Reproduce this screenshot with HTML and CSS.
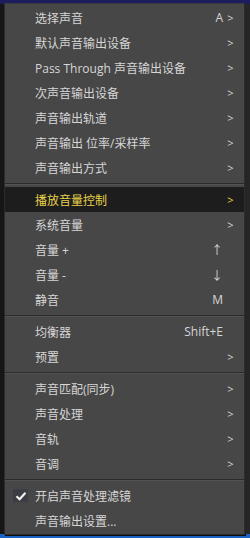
FILE: index.html
```html
<!DOCTYPE html>
<html>
<head>
  <title>声音菜单</title>
  <link rel="stylesheet" href="styles.css">
</head>
<body>
  <div class="screen">
    <ul class="menu">
      <li class="item"><span class="label">选择声音</span><span class="key">A</span><span class="arrow">&gt;</span></li>
      <li class="item"><span class="label">默认声音输出设备</span><span class="arrow">&gt;</span></li>
      <li class="item"><span class="label">Pass Through 声音输出设备</span><span class="arrow">&gt;</span></li>
      <li class="item"><span class="label">次声音输出设备</span><span class="arrow">&gt;</span></li>
      <li class="item"><span class="label">声音输出轨道</span><span class="arrow">&gt;</span></li>
      <li class="item"><span class="label">声音输出 位率/采样率</span><span class="arrow">&gt;</span></li>
      <li class="item"><span class="label">声音输出方式</span><span class="arrow">&gt;</span></li>
      <li class="sep"></li>
      <li class="item active"><span class="label">播放音量控制</span><span class="arrow">&gt;</span></li>
      <li class="item"><span class="label">系统音量</span><span class="arrow">&gt;</span></li>
      <li class="item"><span class="label">音量 +</span><span class="key">↑</span><span class="arrow"></span></li>
      <li class="item"><span class="label">音量 -</span><span class="key">↓</span><span class="arrow"></span></li>
      <li class="item"><span class="label">静音</span><span class="key">M</span><span class="arrow"></span></li>
      <li class="sep"></li>
      <li class="item"><span class="label">均衡器</span><span class="key">Shift+E</span><span class="arrow"></span></li>
      <li class="item"><span class="label">预置</span><span class="arrow">&gt;</span></li>
      <li class="sep"></li>
      <li class="item"><span class="label">声音匹配(同步)</span><span class="arrow">&gt;</span></li>
      <li class="item"><span class="label">声音处理</span><span class="arrow">&gt;</span></li>
      <li class="item"><span class="label">音轨</span><span class="arrow">&gt;</span></li>
      <li class="item"><span class="label">音调</span><span class="arrow">&gt;</span></li>
      <li class="sep"></li>
      <li class="item">
        <span class="check">
          <svg width="12" height="10" viewBox="0 0 12 10"><path d="M1.5 5.2 L4.6 8.2 L10.5 1.8" fill="none" stroke="#f2f2f2" stroke-width="2.2"/></svg>
        </span>
        <span class="label">开启声音处理滤镜</span><span class="arrow"></span>
      </li>
      <li class="item"><span class="label">声音输出设置...</span><span class="arrow"></span></li>
    </ul>
    <div class="side"></div>
  </div>
</body>
</html>
```

FILE: styles.css
```css
html, body {
  margin: 0;
  padding: 0;
}

body {
  width: 250px;
  height: 538px;
  overflow: hidden;
  font-family: "Open Sans", "Noto Sans CJK SC", sans-serif;
  font-size: 12px;
  background:
    linear-gradient(#1c1d5c 0, #1c1d5c 4px, transparent 4px),
    linear-gradient(to top, #1b63c4 0, #1b63c4 4px, transparent 4px),
    #161616;
}

.screen {
  display: flex;
  padding: 3px 0 0 4px;
}

.menu {
  list-style: none;
  margin: 0;
  padding: 1px 0;
  width: 239px;
  background-color: #474747;
  border: 1px solid #2c2c2c;
  border-top-color: #3a3a3a;
  box-shadow: 1px 1px 0 #0e0e0e;
}

.side {
  flex: 1;
  height: 530px;
  margin-top: 1px;
  background-color: #262626;
}

.item {
  display: flex;
  align-items: center;
  height: 25px;
  padding-left: 30px;
  color: #d6d6d6;
  position: relative;
}

.item.active {
  background-color: #1d1d1d;
  color: #e8d34c;
}

.label {
  flex: 1;
  white-space: nowrap;
}

.key {
  text-align: right;
}

.arrow {
  width: 15px;
  padding-right: 6px;
  text-align: center;
  font-size: 11px;
}

.check {
  position: absolute;
  left: 8px;
  top: 6px;
  width: 15px;
  height: 13px;
  display: flex;
  align-items: center;
  justify-content: center;
  background-color: #3c3c44;
}

.sep {
  height: 7px;
  display: flex;
  align-items: center;
}

.sep::after {
  content: "";
  flex: 1;
  height: 1px;
  background-color: #2b2b2b;
  border-bottom: 1px solid #525252;
}
```
